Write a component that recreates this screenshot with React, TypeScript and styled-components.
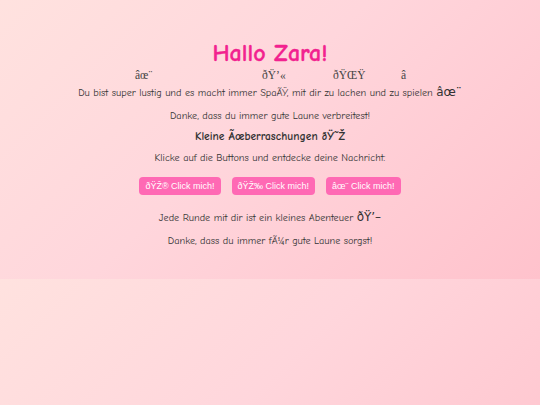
import React from "react";
import styled, { createGlobalStyle } from "styled-components";

const Global = createGlobalStyle`
  html, body { margin: 0; padding: 0; }
  body {
    background: linear-gradient(135deg, #ffe2df 0%, #ffd6dc 45%, #ffc2cc 100%);
    font-family: "Comic Sans MS", "Comic Neue", "Chalkboard SE", cursive;
    color: #333;
  }
`;

const Page = styled.main`
  display: flex;
  flex-direction: column;
  align-items: center;
  text-align: center;
  padding: 39px 0 31px;
`;

const Title = styled.h1`
  margin: 0;
  font-size: 24px;
  line-height: 28px;
  font-weight: 900;
  color: #f2228f;
  -webkit-text-stroke: 0.3px #f2228f;
`;

const Sparkles = styled.div`
  position: relative;
  width: 100%;
  height: 14px;
  margin-top: 1px;
`;

const Sparkle = styled.span<{ $left: number }>`
  position: absolute;
  top: 0;
  left: ${(p) => p.$left}px;
  font-family: "Liberation Serif", serif;
  font-size: 11.5px;
  line-height: 14px;
  color: #444;
`;

const Text = styled.p<{ $top: number }>`
  margin: ${(p) => p.$top}px 0 0;
  font-size: 10.25px;
  line-height: 14px;
`;

const Big = styled.span`
  font-family: "DejaVu Sans", sans-serif;
  font-size: 12px;
  line-height: 10px;
`;

const Heading = styled.h3`
  margin: 7px 0 0;
  font-size: 11.5px;
  line-height: 14px;
  font-weight: bold;
`;

const Buttons = styled.div`
  display: flex;
  gap: 11px;
  margin-top: 12px;
`;

const Button = styled.button`
  height: 18px;
  padding: 0 6px;
  border: none;
  border-radius: 4px;
  background: #ff69b4;
  color: #fff;
  font-family: "Liberation Sans", Arial, sans-serif;
  font-size: 9px;
  cursor: pointer;
`;

export default function App() {
  return (
    <>
      <Global />
      <Page>
        <Title>Hallo Zara!</Title>
        <Sparkles>
          <Sparkle $left={135}>âœ¨</Sparkle>
          <Sparkle $left={262}>ðŸ’«</Sparkle>
          <Sparkle $left={333}>ðŸŒŸ</Sparkle>
          <Sparkle $left={399}>â­</Sparkle>
        </Sparkles>
        <Text $top={4}>
          Du bist super lustig und es macht immer SpaÃŸ, mit dir zu lachen und zu spielen <Big>âœ¨</Big>
        </Text>
        <Text $top={9}>Danke, dass du immer gute Laune verbreitest!</Text>
        <Heading>Kleine Ãœberraschungen ðŸ˜Ž</Heading>
        <Text $top={7}>Klicke auf die Buttons und entdecke deine Nachricht:</Text>
        <Buttons>
          <Button>ðŸŽ® Click mich!</Button>
          <Button>ðŸŽ‰ Click mich!</Button>
          <Button>âœ¨ Click mich!</Button>
        </Buttons>
        <Text $top={16}>Jede Runde mit dir ist ein kleines Abenteuer <Big>ðŸ’–</Big></Text>
        <Text $top={9}>Danke, dass du immer fÃ¼r gute Laune sorgst!</Text>
      </Page>
    </>
  );
}
